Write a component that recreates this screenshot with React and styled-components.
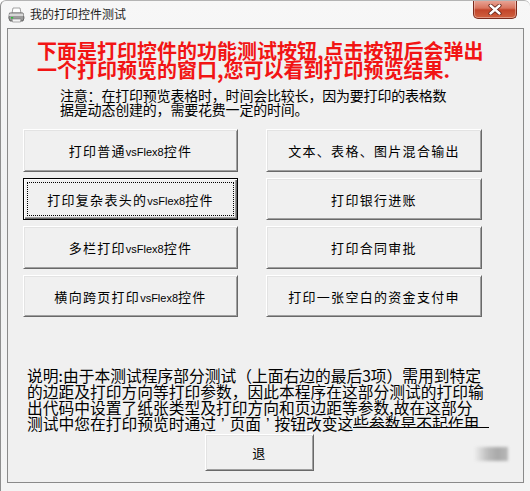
import React from "react";
import styled, { createGlobalStyle } from "styled-components";

const GlobalStyle = createGlobalStyle`
  html, body {
    margin: 0;
    padding: 0;
    background: #ffffff;
  }
  body {
    font-family: "Noto Sans CJK SC", "Liberation Sans", sans-serif;
  }
`;

const Window = styled.div`
  position: relative;
  width: 530px;
  height: 491px;
  box-sizing: border-box;
  border-left: 1px solid #8e8e8e;
  border-top: 1px solid #b4b4b4;
  border-radius: 6px 6px 0 0;
  background: linear-gradient(to bottom, #f7f7f7 0%, #f0f1f2 40%, #f4f4f4 100%);
  display: flex;
  flex-direction: column;
  overflow: hidden;
`;

const TitleBar = styled.div`
  height: 27px;
  display: flex;
  align-items: center;
  padding-left: 7px;
`;

const TitleText = styled.span`
  margin-left: 5px;
  font-size: 12px;
  color: #1e1e1e;
  line-height: 1;
  padding-bottom: 2px;
`;

const CloseButton = styled.div`
  margin-left: auto;
  margin-right: 13px;
  align-self: flex-start;
  margin-top: -1px;
  width: 44px;
  height: 19px;
  box-sizing: border-box;
  border: 1px solid #7a2a1c;
  border-top: none;
  border-radius: 0 0 5px 5px;
  background: linear-gradient(to bottom, #e9a99b 0%, #d9745e 45%, #c2442a 55%, #d0613f 100%);
  box-shadow: inset 0 0 0 1px rgba(255, 255, 255, 0.35);
  display: flex;
  align-items: center;
  justify-content: center;
`;

const Client = styled.div`
  margin-left: 6px;
  width: 517px;
  height: 455px;
  box-sizing: border-box;
  border: 1px solid #8a8a8a;
  background: #f0f0f0;
  display: flex;
  flex-direction: column;
`;

const Headline = styled.div`
  margin: 12px 0 0 29px;
  font-size: 20px;
  font-weight: 700;
  line-height: 19px;
  color: #f21414;
  white-space: nowrap;
`;

const Notice = styled.div`
  margin: 9px 0 0 52px;
  font-size: 14px;
  line-height: 14px;
  color: #000;
  white-space: nowrap;
  letter-spacing: -0.2px;
`;

const ButtonGrid = styled.div`
  margin: 13px 0 0 15px;
  display: grid;
  grid-template-columns: 215px 216px;
  grid-template-rows: 43px 42px 43px 42px;
  column-gap: 28px;
  row-gap: 6px;
`;

const WinButton = styled.button`
  box-sizing: border-box;
  margin: 0;
  padding: 0;
  width: ${(p) => p.$width || "100%"};
  height: ${(p) => p.$height || "100%"};
  background: #f0f0f0;
  border: 1px solid;
  border-color: ${(p) =>
    p.$focused ? "#000 #000 #000 #000" : "#ffffff #696969 #696969 #ffffff"};
  box-shadow: ${(p) =>
    p.$focused
      ? "inset 1px 1px #ffffff, inset -1px -1px #696969, inset -2px -2px #a0a0a0"
      : "inset 1px 1px #e3e3e3, inset -1px -1px #a0a0a0"};
  outline: ${(p) => (p.$focused ? "1px dotted #000" : "none")};
  outline-offset: -5px;
  font-family: "Noto Sans CJK SC", "Liberation Sans", sans-serif;
  font-size: 13px;
  letter-spacing: 1.3px;
  color: #000;
  white-space: nowrap;
  cursor: default;
`;

const Latin = styled.span`
  font-family: "Liberation Sans", sans-serif;
  font-size: 11px;
  letter-spacing: 0;
`;

const Explain = styled.div`
  margin: 51px 0 0 19px;
  width: 462px;
  font-size: 15.75px;
  line-height: 16px;
  color: #000;
`;

const ExplainLine = styled.div`
  display: flex;
  white-space: nowrap;
  height: 16px;
`;

const Quote = styled.span`
  font-family: "Liberation Sans", sans-serif;
  padding: 0 5px;
`;

const Clipped = styled.span`
  flex: 1;
  height: 11px;
  overflow: hidden;
  border-bottom: 1px solid #000;
`;

const ExitRow = styled.div`
  margin: 2px 0 0 197px;
`;

const Smudge = styled.div`
  position: absolute;
  left: 473px;
  top: 446px;
  width: 34px;
  height: 14px;
  background: linear-gradient(to right, rgba(180, 180, 180, 0) 0%, #bcbcbc 40%, #a9a9a9 70%, #b8b8b8 100%);
  filter: blur(1.5px);
`;

const PrinterIcon = () => (
  <svg width="17" height="16" viewBox="0 0 17 16">
    <path d="M5 1 L12 1 L13 6 L4 6 Z" fill="#ffffff" stroke="#8a8a8a" strokeWidth="0.8" />
    <path d="M1.5 6 L15 6 L16 11 L15 14 L2 14 L0.8 11 Z" fill="#9c9c9c" stroke="#505050" strokeWidth="0.8" />
    <path d="M1.5 6.5 L15 6.5 L15.6 9 L1 9 Z" fill="#d8d8d8" />
    <rect x="3" y="10" width="2.2" height="1.6" fill="#2fbf3a" />
    <path d="M4 12 L13 12 L12.5 15 L4.5 15 Z" fill="#f4f4f4" stroke="#7a7a7a" strokeWidth="0.6" />
  </svg>
);

const CloseGlyph = () => (
  <svg width="14" height="11" viewBox="0 0 14 11">
    <path d="M2.5 1.5 L11.5 9.5 M11.5 1.5 L2.5 9.5" stroke="#5a1a10" strokeWidth="4" strokeLinecap="round" />
    <path d="M2.5 1.5 L11.5 9.5 M11.5 1.5 L2.5 9.5" stroke="#ffffff" strokeWidth="2.4" strokeLinecap="round" />
  </svg>
);

const leftButtons = [
  { label: "打印普通", latin: "vsFlex8", tail: "控件" },
  { label: "打印复杂表头的", latin: "vsFlex8", tail: "控件", focused: true },
  { label: "多栏打印", latin: "vsFlex8", tail: "控件" },
  { label: "横向跨页打印", latin: "vsFlex8", tail: "控件" },
];

const rightButtons = [
  "文本、表格、图片混合输出",
  "打印银行进账",
  "打印合同审批",
  "打印一张空白的资金支付申",
];

const App = () => {
  return (
    <>
      <GlobalStyle />
      <Window>
        <TitleBar>
          <PrinterIcon />
          <TitleText>我的打印控件测试</TitleText>
          <CloseButton>
            <CloseGlyph />
          </CloseButton>
        </TitleBar>
        <Client>
          <Headline>
            下面是打印控件的功能测试按钮,点击按钮后会弹出
            <br />
            一个打印预览的窗口,您可以看到打印预览结果.
          </Headline>
          <Notice>
            注意：在打印预览表格时，时间会比较长，因为要打印的表格数
            <br />
            据是动态创建的，需要花费一定的时间。
          </Notice>
          <ButtonGrid>
            {leftButtons.map((b, i) => (
              <React.Fragment key={b.label}>
                <WinButton style={{ gridColumn: 1, gridRow: i + 1 }} $focused={b.focused}>
                  {b.label}
                  <Latin>{b.latin}</Latin>
                  {b.tail}
                </WinButton>
                <WinButton style={{ gridColumn: 2, gridRow: i + 1 }}>
                  {rightButtons[i]}
                </WinButton>
              </React.Fragment>
            ))}
          </ButtonGrid>
          <Explain>
            <ExplainLine>说明:由于本测试程序部分测试（上面右边的最后3项）需用到特定</ExplainLine>
            <ExplainLine>的边距及打印方向等打印参数，因此本程序在这部分测试的打印输</ExplainLine>
            <ExplainLine>出代码中设置了纸张类型及打印方向和页边距等参数,故在这部分</ExplainLine>
            <ExplainLine>
              <span>
                测试中您在打印预览时通过<Quote>’</Quote>页面<Quote>’</Quote>按钮改变这
              </span>
              <Clipped>些参数是不起作用</Clipped>
            </ExplainLine>
          </Explain>
          <ExitRow>
            <WinButton $width="109px" $height="37px">
              退
            </WinButton>
          </ExitRow>
        </Client>
        <Smudge />
      </Window>
    </>
  );
};

export default App;
